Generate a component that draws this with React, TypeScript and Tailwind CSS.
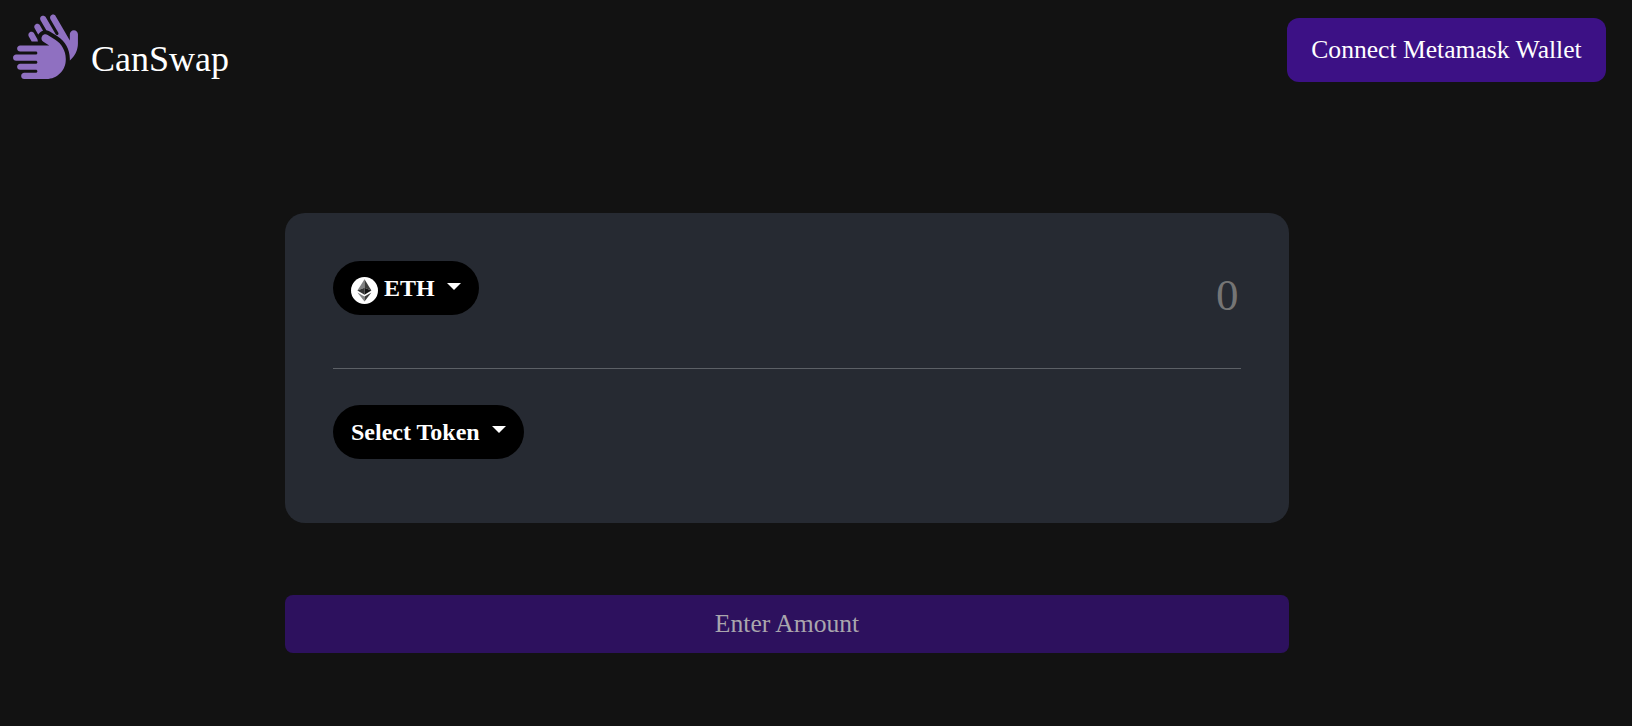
import { FaHands } from "react-icons/fa6";

function EthIcon() {
  return (
    <svg viewBox="0 0 27 27" className="mt-1 h-[27px] w-[27px]">
      <circle cx="13.5" cy="13.5" r="13.5" fill="#fff" />
      <path d="M13.5 2.3 6.4 13.6 13.5 10.7z" fill="#828384" />
      <path d="M13.5 2.3v8.4l6.9 2.9z" fill="#3c3c3b" />
      <path d="M6.4 13.6 13.5 17.8v-7.1z" fill="#343434" />
      <path d="M20.4 13.6 13.5 17.8v-7.1z" fill="#131313" />
      <path d="M6.4 15.4 13.5 24.6v-5z" fill="#828384" />
      <path d="M20.4 15.4 13.5 24.6v-5z" fill="#3c3c3b" />
    </svg>
  );
}

function Caret({ className }: { className: string }) {
  return (
    <svg viewBox="0 0 14 7" className={className}>
      <path d="M0 0h14L7 7z" fill="#fff" />
    </svg>
  );
}

function Header() {
  return (
    <header className="flex h-[213px] items-start justify-between pr-[26px] pl-[9px]">
      <div className="flex pt-2.5">
        <FaHands className="h-[73px] w-[73px] text-[#8f70c1]" />
        <span className="mt-[22px] ml-[9px] text-[36px] leading-[54px] text-white">CanSwap</span>
      </div>
      <button className="mt-[18px] h-16 w-[319px] rounded-xl bg-[#3c1185] text-[25.6px] leading-none whitespace-nowrap text-white">
        Connect Metamask Wallet
      </button>
    </header>
  );
}

export default function App() {
  return (
    <div className="min-h-screen bg-[#121212] font-['Liberation_Serif','Times_New_Roman',serif]">
      <Header />
      <main className="ml-[285px] w-[1004px]">
        <section className="h-[310px] rounded-[20px] bg-[#262a32] px-12 pt-12">
          <div className="flex h-[108px] items-start justify-between border-b border-[#5c6066]">
            <button className="flex h-[54px] items-center rounded-[27px] bg-black px-[18px] text-2xl font-bold text-white">
              <EthIcon />
              <span className="ml-1.5">ETH</span>
              <Caret className="mb-1 ml-3 h-[7px] w-3.5" />
            </button>
            <input
              placeholder="0"
              className="mt-2 h-[54px] w-[300px] bg-transparent pr-[2.5px] text-right text-[45px] text-white outline-none placeholder:text-[#757575]"
            />
          </div>
          <button className="mt-9 flex h-[54px] items-center rounded-[27px] bg-black px-[18px] text-2xl font-bold text-white">
            <span>Select Token</span>
            <Caret className="mb-1.5 ml-3 h-[7px] w-3.5" />
          </button>
        </section>
        <button className="mt-[72px] h-[58px] w-full rounded-lg bg-[#2d115e] text-[25.6px] leading-none text-[#a9a6ad]">
          Enter Amount
        </button>
      </main>
    </div>
  );
}
